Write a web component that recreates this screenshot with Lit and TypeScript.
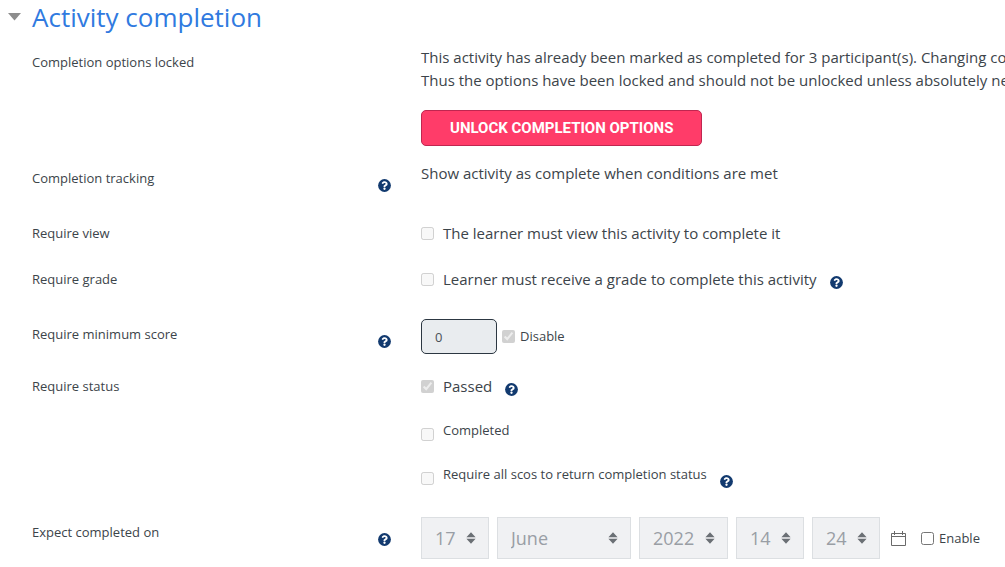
import { LitElement, html, css, svg, nothing } from "lit";
import { customElement, property } from "lit/decorators.js";

@customElement("help-icon")
class HelpIcon extends LitElement {
  @property() topic = "";

  static styles = css`
    :host { display: block; flex: none; width: 13px; height: 13px; }
    .help { display: block; width: 13px; height: 13px; padding: 0; border: 0; background: none; cursor: pointer; }
    .glyph { display: block; width: 13px; height: 13px; }
  `;

  render() {
    return html`<button class="help" type="button" aria-label="Help with ${this.topic}">
      <svg class="glyph" viewBox="0 0 512 512" aria-hidden="true">
        <circle cx="256" cy="256" r="252" fill="#123a6f" />
        <path
          fill="#fff"
          d="M262.655 90c-54.497 0-89.255 22.957-116.549 63.758-3.536 5.286-2.353 12.415 2.715 16.258l34.699 26.31c5.205 3.947 12.621 3.008 16.665-2.122 17.864-22.658 30.113-35.797 57.303-35.797 20.429 0 45.698 13.148 45.698 32.958 0 14.976-12.363 22.667-32.534 33.976C247.128 238.528 216 254.941 216 296v4c0 6.627 5.373 12 12 12h56c6.627 0 12-5.373 12-12v-1.333c0-28.462 83.186-29.647 83.186-106.667 0-58.002-60.165-102-116.531-102zM256 338c-25.365 0-46 20.635-46 46s20.635 46 46 46 46-20.636 46-46-20.635-46-46-46z"
        />
      </svg>
    </button>`;
  }
}

@customElement("date-select")
class DateSelect extends LitElement {
  @property() name = "";
  @property() value = "";

  static styles = css`
    :host { display: block; position: relative; }
    .select {
      appearance: none; box-sizing: border-box; display: block; width: 100%; height: 42px;
      margin: 0; padding: 0 13px; border: 1px solid #dcdfe2; border-radius: 0;
      background: #f0f1f3; color: #999ea5; opacity: 1;
      font: 18px/24px "Open Sans", "Noto Sans", sans-serif;
    }
    .arrows { position: absolute; right: 13px; top: 15px; width: 10px; height: 12px; pointer-events: none; }
  `;

  render() {
    return html`<select class="select" aria-label=${this.name} disabled>
        <option>${this.value}</option>
      </select>
      <svg class="arrows" viewBox="0 0 10 12" aria-hidden="true">
        <path d="M5 0.3 9.6 5.2H0.4ZM5 11.7 9.6 6.8H0.4Z" fill="#6b7075" />
      </svg>`;
  }
}

interface Field { name: string; value: string; size: string; }

const DATE_FIELDS: Field[] = [
  { name: "Day", value: "17", size: "short" },
  { name: "Month", value: "June", size: "month" },
  { name: "Year", value: "2022", size: "year" },
  { name: "Hour", value: "14", size: "short" },
  { name: "Minute", value: "24", size: "short" },
];

@customElement("app-root")
class AppRoot extends LitElement {
  static styles = css`
    :host {
      display: block; overflow: hidden; background: #fff; color: #3c444a;
      font: 15px/23px "Open Sans", "Noto Sans", sans-serif;
    }
    .header { display: flex; align-items: center; padding-left: 8px; height: 34px; margin: 0; }
    .toggle { display: flex; align-items: center; gap: 11px; padding: 0; border: 0; background: none; color: #307ae0; font: inherit; cursor: pointer; }
    .title { margin: 0; font-size: 26px; line-height: 34px; font-weight: 400; }
    .caret { width: 13px; height: 8px; }
    .form { display: grid; padding: 12px 0 8px 32px; }
    .row { display: grid; grid-template-columns: minmax(0, 359fr) minmax(0, 584fr); column-gap: 30px; }
    .name { display: flex; justify-content: space-between; align-items: flex-start; font-size: 13px; }
    .name help-icon { margin-top: 12px; }
    .static { padding-bottom: 16px; }
    .static .name { padding-top: 5px; }
    .tracking { padding-bottom: 30px; }
    .view { padding-bottom: 23px; }
    .grade { padding-bottom: 28px; }
    .score { padding-bottom: 21px; }
    .score .name { padding-top: 4px; }
    .status { padding-bottom: 29px; }
    .date .name { padding-top: 4px; }
    .notice { margin: 0 0 18px; white-space: nowrap; }
    .text { margin: 0; }
    .unlock {
      box-sizing: border-box; height: 36px; padding: 0 28px; border: 1px solid #c02650; border-radius: 5px;
      background: #ff3c69; color: #fff; font: 700 15px/20px Roboto, "Open Sans", sans-serif; text-transform: uppercase; cursor: pointer;
    }
    .option { display: flex; align-items: center; }
    .check { display: flex; align-items: center; gap: 9px; }
    .box { flex: none; width: 13px; height: 13px; margin: 0; }
    .option help-icon { margin: 6px 0 0 13px; }
    .options { display: grid; row-gap: 21px; }
    .option.small { align-items: flex-start; font-size: 13px; }
    .small .box { margin-top: 7px; }
    .option.small help-icon { margin-top: 12px; }
    .inline { display: flex; align-items: center; font-size: 13px; gap: 5px; }
    .number {
      box-sizing: border-box; width: 76px; height: 35px; padding: 0 13px; margin: 0; border: 1px solid #2c3742; border-radius: 5px;
      background: #e9ecef; color: #495057; font: 13px/23px "Open Sans", "Noto Sans", sans-serif;
    }
    .tick { display: flex; align-items: center; gap: 5px; font-size: 13px; }
    .dates { display: flex; flex-wrap: wrap; align-items: center; gap: 8px; }
    .short { width: 68px; }
    .month { width: 134px; }
    .year { width: 89px; }
    .calendar { padding: 0; border: 0; margin: 0 7px 0 3px; background: none; cursor: pointer; }
    .calendar svg { display: block; width: 15px; height: 15px; }
  `;

  private label(text: string, help = false) {
    return html`<div class="name"><span>${text}</span>${help ? html`<help-icon topic=${text}></help-icon>` : nothing}</div>`;
  }

  private option(text: string, checked = false, help = false, small = false) {
    return html`<div class="option ${small ? "small" : ""}">
      <label class="check"><input class="box" type="checkbox" ?checked=${checked} disabled /><span>${text}</span></label>
      ${help ? html`<help-icon topic=${text}></help-icon>` : nothing}
    </div>`;
  }

  render() {
    return html`
      <header class="header">
        <h2 class="title">
          <button class="toggle" type="button" aria-expanded="true">
            <svg class="caret" viewBox="0 0 13 8" aria-hidden="true"><path d="M0 0H13L6.5 7.4Z" fill="#8d8d8d" /></svg>
            <span>Activity completion</span>
          </button>
        </h2>
      </header>
      <form class="form">
        <div class="row static">
          ${this.label("Completion options locked")}
          <div>
            <p class="notice">
              This activity has already been marked as completed for 3 participant(s). Changing completion options<br />
              Thus the options have been locked and should not be unlocked unless absolutely necessary.
            </p>
            <button class="unlock" type="button">Unlock completion options</button>
          </div>
        </div>
        <div class="row static tracking">
          ${this.label("Completion tracking", true)}
          <p class="text">Show activity as complete when conditions are met</p>
        </div>
        <div class="row view">
          ${this.label("Require view")}
          ${this.option("The learner must view this activity to complete it")}
        </div>
        <div class="row grade">
          ${this.label("Require grade")}
          ${this.option("Learner must receive a grade to complete this activity", false, true)}
        </div>
        <div class="row score">
          ${this.label("Require minimum score", true)}
          <div class="inline">
            <input class="number" type="text" value="0" aria-label="Require minimum score" disabled />
            <label class="tick"><input class="box" type="checkbox" checked disabled />Disable</label>
          </div>
        </div>
        <div class="row status">
          ${this.label("Require status")}
          <div class="options">
            ${this.option("Passed", true, true)}
            ${this.option("Completed", false, false, true)}
            ${this.option("Require all scos to return completion status", false, true, true)}
          </div>
        </div>
        <div class="row date">
          ${this.label("Expect completed on", true)}
          <div class="dates">
            ${DATE_FIELDS.map((f) => html`<date-select class=${f.size} name=${f.name} value=${f.value}></date-select>`)}
            <button class="calendar" type="button" aria-label="Calendar">
              <svg viewBox="0 0 15 15" fill="none" stroke="#6a6a6a" aria-hidden="true">
                ${svg`<path d="M0.5 2.5H14.5V14.5H0.5ZM0.5 5.5H14.5M3.5 0V4M11.5 0V4" />`}
              </svg>
            </button>
            <label class="tick"><input class="box" type="checkbox" />Enable</label>
          </div>
        </div>
      </form>
    `;
  }
}
